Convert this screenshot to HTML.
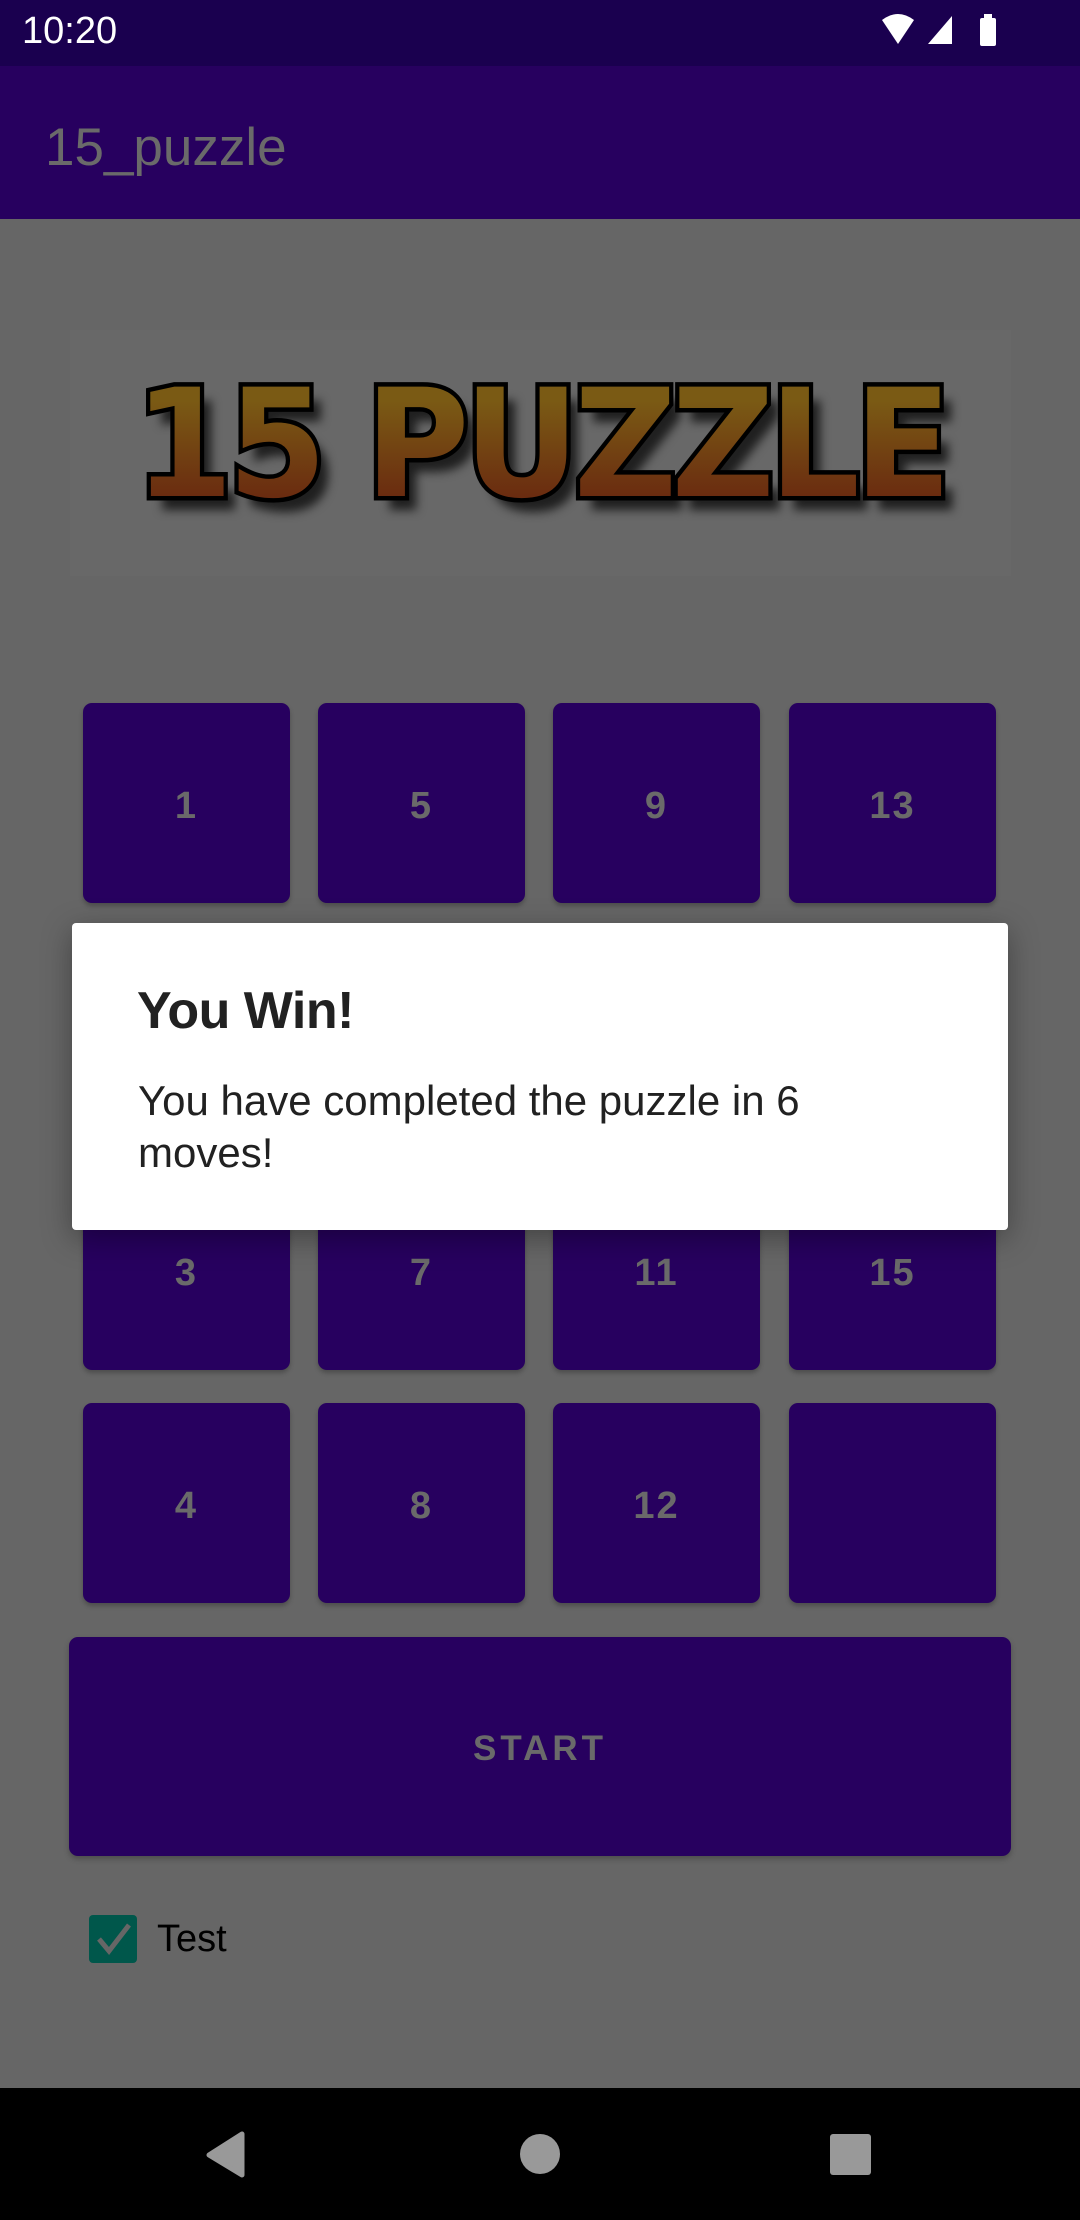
<!DOCTYPE html>
<html><head><meta charset="utf-8">
<style>
*{margin:0;padding:0;box-sizing:border-box}
html{background:#fff}
body{width:1080px;height:2220px;background:#666;position:relative;overflow:hidden;font-family:"Liberation Sans",sans-serif;border-radius:60px}
.abs{position:absolute}
.tile{position:absolute;width:207px;height:200px;background:#27005f;border-radius:9px;box-shadow:0 3px 5px rgba(0,0,0,.25);color:#6a6a6a;font-size:38px;display:flex;align-items:center;justify-content:center;letter-spacing:2px;padding-top:6px;font-weight:bold;-webkit-text-stroke:0}
</style></head><body>
<div class="abs" style="left:0;top:0;width:1080px;height:66px;background:#1a004f"></div>
<div class="abs" style="left:22px;top:10px;color:#fff;font-size:38px">10:20</div>
<svg class="abs" style="left:880px;top:12px" width="130" height="40" viewBox="0 0 130 40">
<path d="M2 8 Q18 -4 34 8 L18 32 Z" fill="#fff"/>
<path d="M48 32 L72 4 L72 32 Z" fill="#fff"/>
<rect x="100" y="6" width="16" height="28" rx="2" fill="#fff"/><rect x="104" y="2" width="8" height="5" fill="#fff"/>
</svg>
<div class="abs" style="left:0;top:66px;width:1080px;height:153px;background:#27005f"></div>
<div class="abs" style="left:45px;top:117px;color:#6a6a6a;font-size:53px">15_puzzle</div>

<div class="abs" style="left:70px;top:330px;width:941px;height:246px;background:#686868"></div>
<div class="abs" style="left:90px;top:335px;width:900px;height:220px;font-family:'DejaVu Sans',sans-serif;font-weight:bold;font-size:150px;letter-spacing:-6px;line-height:220px;text-align:center;color:#7a4a14;-webkit-text-stroke:9px #000;text-shadow:12px 14px 10px rgba(0,0,0,.7);transform:scaleX(.95)">15 PUZZLE</div>
<div class="abs" style="left:90px;top:335px;width:900px;height:220px;font-family:'DejaVu Sans',sans-serif;font-weight:bold;font-size:150px;letter-spacing:-6px;line-height:220px;text-align:center;background:linear-gradient(#7a5a14 30%,#6a2a10 75%);-webkit-background-clip:text;color:transparent;transform:scaleX(.95)">15 PUZZLE</div>

<div class="tile" style="left:83px;top:703px">1</div>
<div class="tile" style="left:318px;top:703px">5</div>
<div class="tile" style="left:553px;top:703px">9</div>
<div class="tile" style="left:789px;top:703px">13</div>
<div class="tile" style="left:83px;top:937px"></div>
<div class="tile" style="left:318px;top:937px"></div>
<div class="tile" style="left:553px;top:937px"></div>
<div class="tile" style="left:789px;top:937px"></div>
<div class="tile" style="left:83px;top:1170px">3</div>
<div class="tile" style="left:318px;top:1170px">7</div>
<div class="tile" style="left:553px;top:1170px">11</div>
<div class="tile" style="left:789px;top:1170px">15</div>
<div class="tile" style="left:83px;top:1403px">4</div>
<div class="tile" style="left:318px;top:1403px">8</div>
<div class="tile" style="left:553px;top:1403px">12</div>
<div class="tile" style="left:789px;top:1403px"></div>

<div class="abs" style="left:69px;top:1637px;width:942px;height:219px;background:#27005f;border-radius:9px;box-shadow:0 3px 6px rgba(0,0,0,.25);color:#6a6a6a;font-size:35px;font-weight:bold;letter-spacing:4px;padding-top:4px;display:flex;align-items:center;justify-content:center">START</div>

<div class="abs" style="left:89px;top:1915px;width:48px;height:48px;background:#00574b;border-radius:4px"></div>
<svg class="abs" style="left:89px;top:1915px" width="48" height="48"><path d="M10 24 L20 36 L40 10" stroke="#666" stroke-width="5" fill="none"/></svg>
<div class="abs" style="left:157px;top:1918px;font-size:38px;color:#000">Test</div>

<div class="abs" style="left:72px;top:923px;width:936px;height:307px;background:#fff;border-radius:4px;box-shadow:0 8px 30px rgba(0,0,0,.35)"></div>
<div class="abs" style="left:137px;top:981px;font-size:52px;color:#212121;font-weight:bold;-webkit-text-stroke:0;letter-spacing:-0.5px">You Win!</div>
<div class="abs" style="left:138px;top:1075px;font-size:42px;line-height:52px;color:#212121;width:720px">You have completed the puzzle in 6 moves!</div>

<div class="abs" style="left:0;top:2088px;width:1080px;height:132px;background:#000"></div>
<svg class="abs" style="left:0;top:2088px" width="1080" height="132">
<path d="M242 46 L242 87 L209 67 Z" fill="#999" stroke="#999" stroke-width="5" stroke-linejoin="round"/>
<ellipse cx="540" cy="66" rx="20" ry="20" fill="#999"/>
<rect x="830" y="46" width="41" height="41" rx="3" fill="#999"/>
</svg>
</body></html>
